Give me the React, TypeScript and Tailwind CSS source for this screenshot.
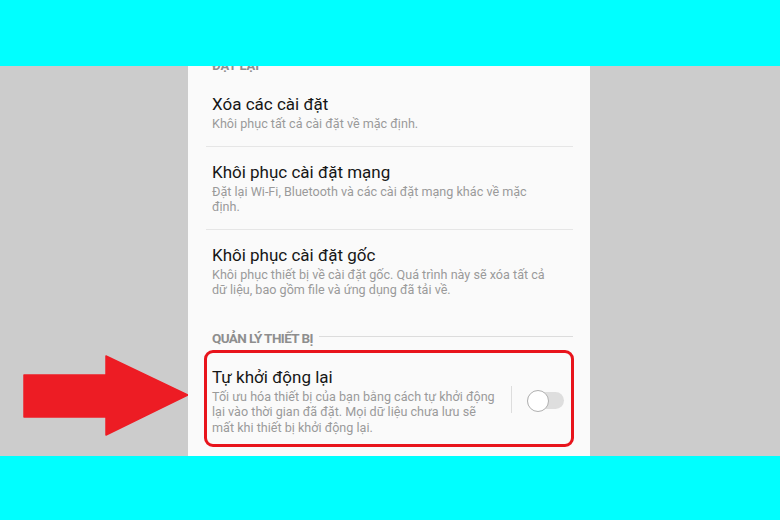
const font = { fontFamily: 'Roboto, "Noto Sans", sans-serif' };

const Item = ({ title, lines }: { title: string; lines: string[] }) => (
  <div className="px-[24px]">
    <div className="text-[17px] leading-[20px] text-[#161616]">{title}</div>
    <div className="mt-[2px] text-[12.6px] leading-[15.5px] text-[#9a9a9a] whitespace-nowrap">
      {lines.map((l, i) => (
        <div key={i}>{l}</div>
      ))}
    </div>
  </div>
);

const Divider = () => <div className="mx-[18px] mr-[17px] h-px bg-[#e6e6e6]" />;

export default function App() {
  return (
    <div className="w-[780px] h-[520px] flex flex-col overflow-hidden" style={font}>
      <div className="h-[66px] bg-[#00ffff]" />
      <div className="h-[390px] flex bg-[#cccccc]">
        <div className="w-[188px] shrink-0">
          <svg width="188" height="390" viewBox="0 66 188 390">
            <polygon
              points="24,375 106,375 106,356 188,395 106,435 106,417 24,417"
              fill="#ed1c24"
              stroke="#ed1c24"
              strokeWidth="1.5"
              strokeLinejoin="round"
            />
          </svg>
        </div>
        <div className="w-[402px] shrink-0 bg-[#fafafa] overflow-hidden">
          <div className="-mt-[8px] px-[24px] text-[13px] leading-[16px] font-bold text-[#8e8e8e]">ĐẶT LẠI</div>
          <div className="pt-[20px] pb-[14px]">
            <Item title="Xóa các cài đặt" lines={['Khôi phục tất cả cài đặt về mặc định.']} />
          </div>
          <Divider />
          <div className="pt-[15px] pb-[14px]">
            <Item
              title="Khôi phục cài đặt mạng"
              lines={['Đặt lại Wi-Fi, Bluetooth và các cài đặt mạng khác về mặc', 'định.']}
            />
          </div>
          <Divider />
          <div className="pt-[15px]">
            <Item
              title="Khôi phục cài đặt gốc"
              lines={['Khôi phục thiết bị về cài đặt gốc. Quá trình này sẽ xóa tất cả', 'dữ liệu, bao gồm file và ứng dụng đã tải về.']}
            />
          </div>
          <div className="mt-[32px] pl-[24px] pr-[17px] flex items-center gap-[6px]">
            <span className="text-[13.5px] leading-[16px] font-bold text-[#8e8e8e] tracking-[-0.6px] whitespace-nowrap">
              QUẢN LÝ THIẾT BỊ
            </span>
            <div className="flex-1 h-px bg-[#dcdcdc] mt-[-3px]" />
          </div>
          <div className="mt-[4px] ml-[16px] mr-[16px] border-[3px] border-[#e8141c] rounded-[9px] flex items-center pt-[14px] pb-[9px] pr-[7px]">
            <div className="flex-1 pl-[5px]">
              <div className="text-[17px] leading-[20px] text-[#161616]">Tự khởi động lại</div>
              <div className="mt-[2px] text-[12.6px] leading-[15.5px] text-[#9a9a9a] whitespace-nowrap">
                <div>Tối ưu hóa thiết bị của bạn bằng cách tự khởi động</div>
                <div>lại vào thời gian đã đặt. Mọi dữ liệu chưa lưu sẽ</div>
                <div>mất khi thiết bị khởi động lại.</div>
              </div>
            </div>
            <div className="w-px h-[27px] bg-[#dddddd] mr-[15px] -mt-[3px]" />
            <div className="relative w-[37px] h-[22px] flex items-center">
              <div className="w-[37px] h-[17px] rounded-full bg-[#dedede]" />
              <div className="absolute left-0 top-0 w-[22px] h-[22px] rounded-full bg-white border border-[#b0b0b0]" />
            </div>
          </div>
        </div>
      </div>
      <div className="flex-1 bg-[#00ffff]" />
    </div>
  );
}
